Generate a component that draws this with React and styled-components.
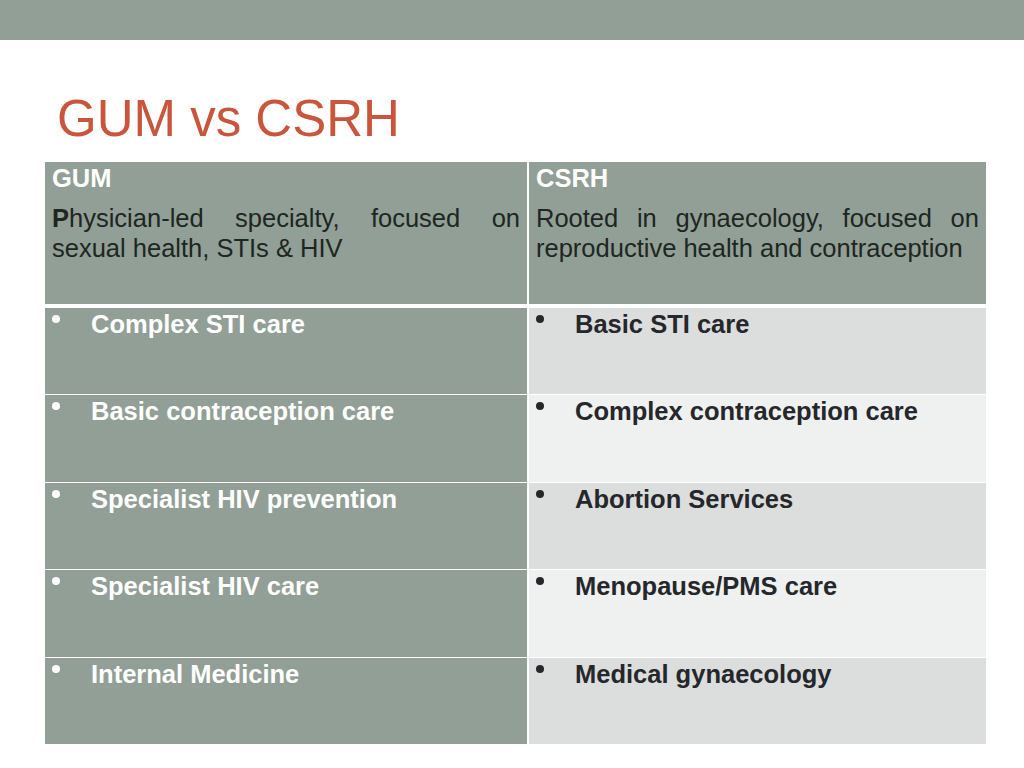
import React from "react";
import styled, { createGlobalStyle } from "styled-components";

const GlobalStyle = createGlobalStyle`
  html, body {
    margin: 0;
    padding: 0;
    background: #ffffff;
    font-family: "Liberation Sans", Arial, sans-serif;
  }
`;

const Slide = styled.div`
  width: 1024px;
  height: 768px;
  background: #ffffff;
  display: flex;
  flex-direction: column;
  overflow: hidden;
`;

const TopBar = styled.div`
  height: 40px;
  background: #919f96;
  flex-shrink: 0;
`;

const Title = styled.h1`
  margin: 51px 0 0 57px;
  font-size: 51px;
  font-weight: normal;
  line-height: 56px;
  color: #c8553c;
`;

const Table = styled.div`
  margin: 15px 0 0 45px;
  width: 941px;
  display: grid;
  grid-template-columns: 482px 457px;
  grid-template-rows: 145px repeat(5, 86.4px);
  column-gap: 2px;
  row-gap: 1px;
  background: #ffffff;
`;

const HeaderCell = styled.div`
  background: #919f96;
  padding: 2px 7px 0 7px;
  margin-bottom: 3px;
`;

const HeaderTitle = styled.div`
  font-size: 25.5px;
  font-weight: bold;
  color: #ffffff;
  line-height: 28px;
`;

const HeaderText = styled.p`
  margin: 11px 0 0 0;
  font-size: 25.5px;
  line-height: 30px;
  color: #1e2621;
  text-align: justify;
`;

const Cell = styled.div`
  background: ${p => p.$bg};
  color: ${p => p.$fg};
  display: flex;
  align-items: flex-start;
  padding: 1px 0 0 7px;
  font-size: 25.5px;
  font-weight: bold;
  line-height: 30px;
`;

const Bullet = styled.span`
  width: 39px;
  flex-shrink: 0;
  &::before {
    content: "";
    display: block;
    width: 8px;
    height: 8px;
    margin-top: 6px;
    border-radius: 50%;
    background: currentColor;
  }
`;

const gumItems = [
  "Complex STI care",
  "Basic contraception care",
  "Specialist HIV prevention",
  "Specialist HIV care",
  "Internal Medicine",
];

const csrhItems = [
  "Basic STI care",
  "Complex contraception care",
  "Abortion Services",
  "Menopause/PMS care",
  "Medical gynaecology",
];

export default function App() {
  return (
    <Slide>
      <GlobalStyle />
      <TopBar />
      <Title>GUM vs CSRH</Title>
      <Table>
        <HeaderCell>
          <HeaderTitle>GUM</HeaderTitle>
          <HeaderText>
            <b>P</b>hysician-led specialty, focused on sexual health, STIs &amp; HIV
          </HeaderText>
        </HeaderCell>
        <HeaderCell>
          <HeaderTitle>CSRH</HeaderTitle>
          <HeaderText>
            Rooted in gynaecology, focused on reproductive health and contraception
          </HeaderText>
        </HeaderCell>
        {gumItems.map((item, i) => (
          <React.Fragment key={item}>
            <Cell $bg="#919f96" $fg="#ffffff">
              <Bullet />
              {item}
            </Cell>
            <Cell $bg={i % 2 === 0 ? "#dcdedd" : "#eff0f0"} $fg="#25272b">
              <Bullet />
              {csrhItems[i]}
            </Cell>
          </React.Fragment>
        ))}
      </Table>
    </Slide>
  );
}
